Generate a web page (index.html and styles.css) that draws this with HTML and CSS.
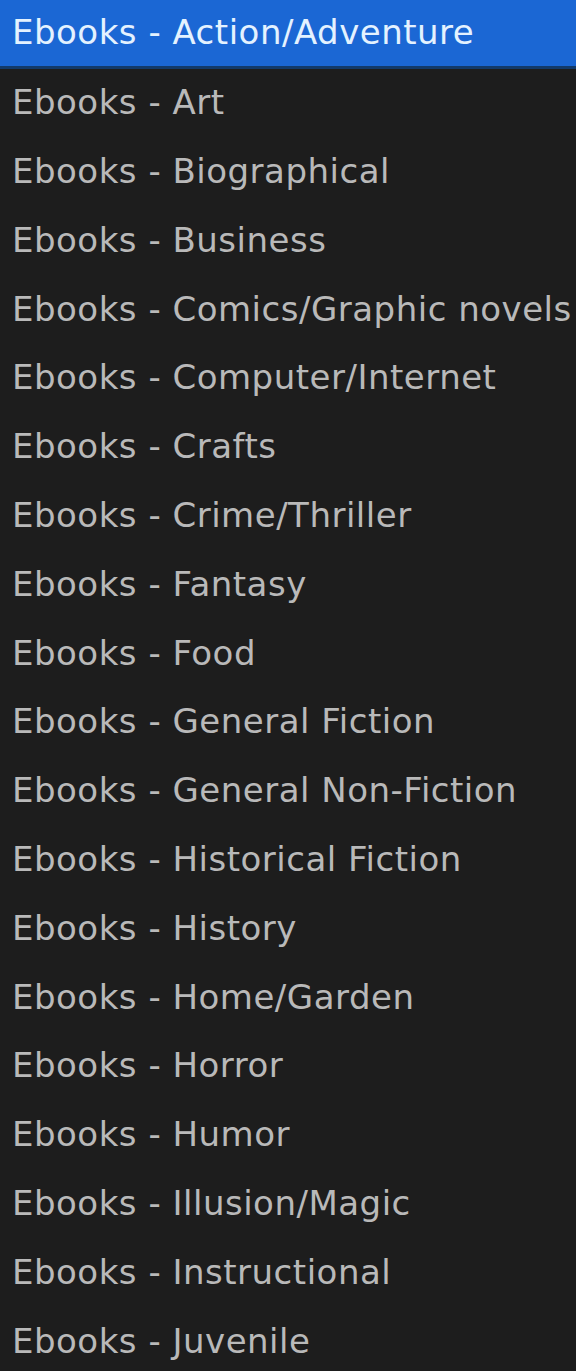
FILE: index.html
```html
<!DOCTYPE html>
<html lang="en">
<head>
    <meta charset="UTF-8">
    <meta name="viewport" content="width=device-width, initial-scale=1.0">
    <title>Categories</title>
    <link rel="stylesheet" href="styles.css">
</head>
<body>
    <ul class="dropdown">
        <li class="option selected">Ebooks - Action/Adventure</li>
        <li class="option">Ebooks - Art</li>
        <li class="option">Ebooks - Biographical</li>
        <li class="option">Ebooks - Business</li>
        <li class="option">Ebooks - Comics/Graphic novels</li>
        <li class="option">Ebooks - Computer/Internet</li>
        <li class="option">Ebooks - Crafts</li>
        <li class="option">Ebooks - Crime/Thriller</li>
        <li class="option">Ebooks - Fantasy</li>
        <li class="option">Ebooks - Food</li>
        <li class="option">Ebooks - General Fiction</li>
        <li class="option">Ebooks - General Non-Fiction</li>
        <li class="option">Ebooks - Historical Fiction</li>
        <li class="option">Ebooks - History</li>
        <li class="option">Ebooks - Home/Garden</li>
        <li class="option">Ebooks - Horror</li>
        <li class="option">Ebooks - Humor</li>
        <li class="option">Ebooks - Illusion/Magic</li>
        <li class="option">Ebooks - Instructional</li>
        <li class="option">Ebooks - Juvenile</li>
    </ul>
</body>
</html>
```

FILE: styles.css
```css
body {
    margin: 0;
    padding: 0;
    background-color: #1d1d1d;
    font-family: "DejaVu Sans", Verdana, sans-serif;
    overflow: hidden;
}
.dropdown {
    list-style: none;
    margin: 0;
    padding: 0;
}
.option {
    height: 68.8px;
    box-sizing: border-box;
    display: flex;
    align-items: center;
    padding-left: 12px;
    padding-bottom: 2px;
    font-size: 34px;
    color: #b9b9b9;
    white-space: nowrap;
    letter-spacing: 0.5px;
}
.option.selected {
    background-color: #1b67d4;
    color: #e4f2ff;
    border-bottom: 3px solid #123a6a;
}
```
